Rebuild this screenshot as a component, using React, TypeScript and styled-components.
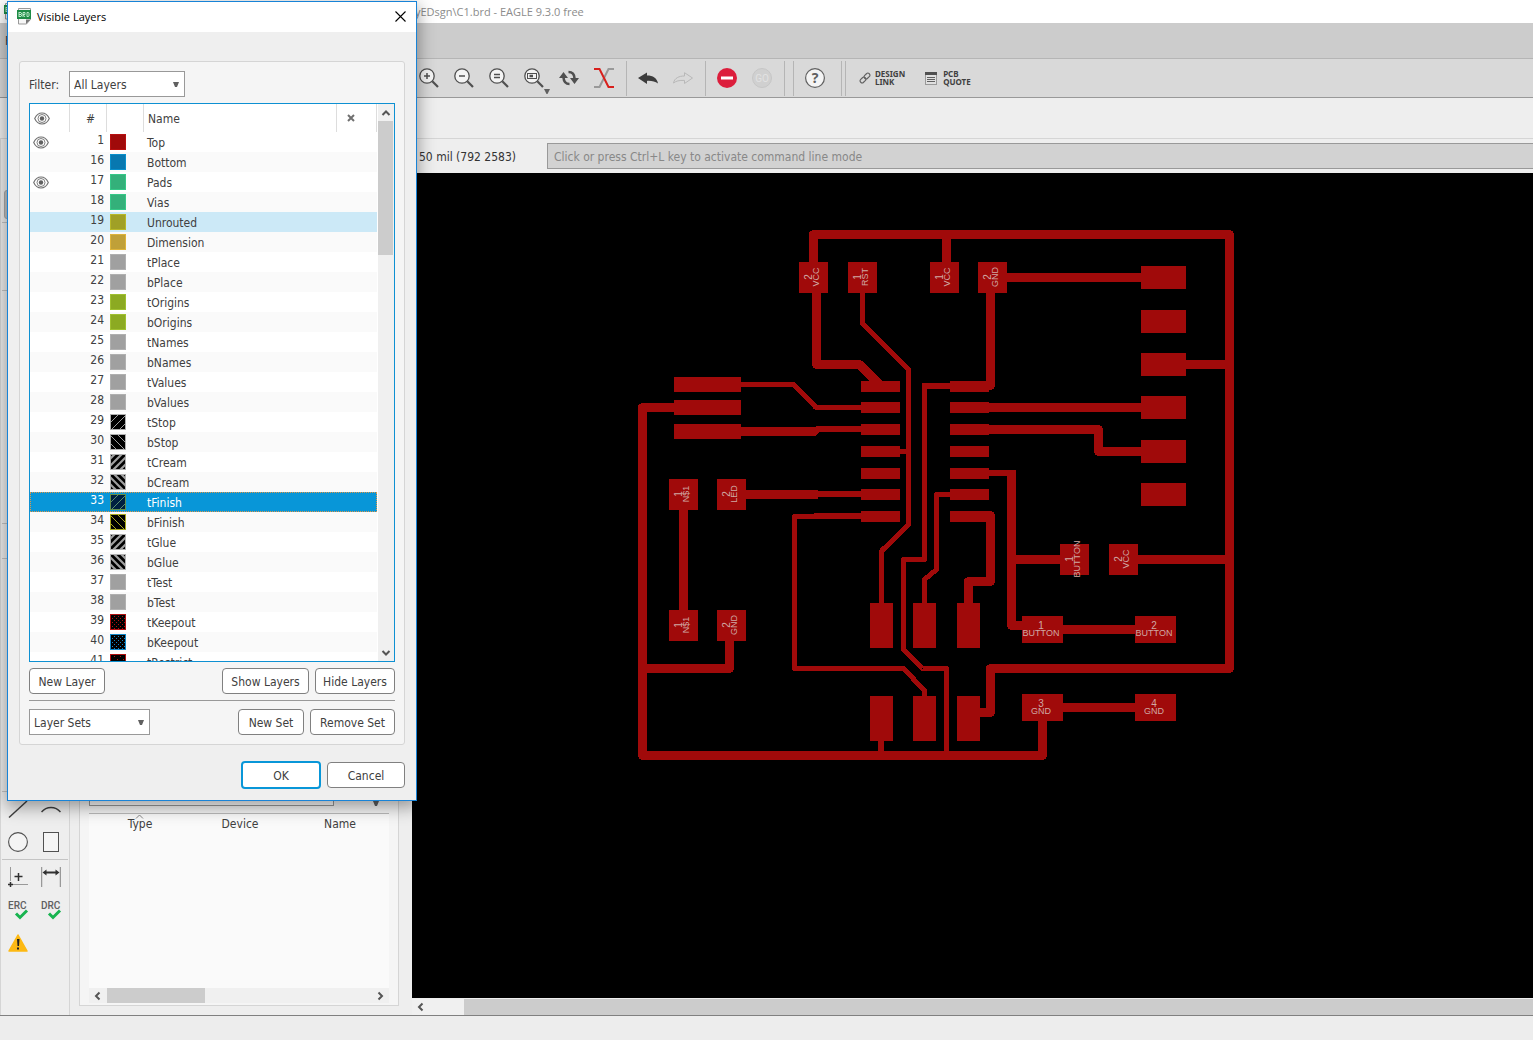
import React from "react";
import styled, { createGlobalStyle, css } from "styled-components";

const UI_FONT = '"DejaVu Sans Condensed", "Noto Sans", sans-serif';
const TITLE_FONT = '"Open Sans", "Noto Sans", sans-serif';
const COPPER = "#a00a0a";

const GlobalStyle = createGlobalStyle`
  *, *::before, *::after { box-sizing: border-box; }
  body { margin: 0; background: #eee; overflow: hidden; }
  button, input, select { font: inherit; color: inherit; margin: 0; }
`;

/* ---------- main window ---------- */

const Window = styled.div`
  position: relative;
  display: flex;
  flex-direction: column;
  height: 100vh;
  font: 12px/16px ${UI_FONT};
  color: #404040;
  background: #eeeeee;
`;

const TitleBar = styled.header`
  display: flex;
  align-items: center;
  gap: 396px;
  height: 23px;
  padding-left: 3px;
  background: #fff;
  color: #8c8c8c;
  font: 11px/16px ${TITLE_FONT};
  white-space: nowrap;
`;

const MenuBar = styled.nav`
  display: flex;
  align-items: center;
  height: 36px;
  padding-left: 5px;
  background: #ccc;
  border-bottom: 1px solid #b5b5b5;
`;

const ToolBar = styled.div`
  display: flex;
  align-items: center;
  height: 39px;
  padding-left: 411px;
  background: #d9d9d9;
  border-bottom: 1px solid #999;
`;

const ToolButton = styled.button`
  position: relative;
  display: grid;
  place-items: center;
  width: 35px;
  height: 34px;
  padding: 0;
  border: 0;
  background: none;
`;

const MenuArrow = styled.svg`
  position: absolute;
  right: 1px;
  bottom: 1px;
`;

const Divider = styled.span`
  width: 1px;
  height: 35px;
  margin: 0 3px 0 5px;
  background: #b5b5b5;
`;

const Grip = styled.span`
  width: 5px;
  height: 35px;
  margin: 0 13px 0 9px;
  border: solid #b5b5b5;
  border-width: 0 1px;
`;

const LabelledTool = styled.button`
  display: flex;
  align-items: center;
  gap: 4px;
  margin-right: 20px;
  padding: 0;
  border: 0;
  background: none;
  color: #404040;
  font: 700 8px/8px "Noto Sans", sans-serif;
  text-align: left;
`;

const SheetBar = styled.div`
  height: 41px;
  border-bottom: 1px solid #d5d5d5;
`;

const Workspace = styled.main`
  flex: 1;
  min-height: 0;
  display: grid;
  grid-template-columns: 70px 342px 1fr;
`;

const StatusBar = styled.footer`
  height: 25px;
  border-top: 1px solid #808080;
  background: #ededed;
`;

/* ---------- drawing tools ---------- */

const ToolBox = styled.aside`
  padding: 0 1px;
  border: solid #d5d5d5;
  border-width: 0 1px;
`;

const ToolGroup = styled.div<{ $height: number }>`
  display: grid;
  grid-template-columns: 32px 34px;
  grid-auto-rows: 33px;
  height: ${(p) => p.$height}px;
  border-bottom: 1px solid #c4c4c4;
  &:last-child { border-bottom: 0; }
`;

const DrawTool = styled.button<{ $active?: boolean }>`
  display: grid;
  place-items: center;
  padding: 0;
  border: 0;
  background: none;
  ${(p) => p.$active && css`
    grid-row: 2;
    margin: 18px 2px -14px;
    border: 1px solid #aaa;
    border-radius: 3px;
    background: #c4c4c4;
  `}
`;

/* ---------- inspector panel ---------- */

const PanelColumn = styled.section`
  display: flex;
  min-height: 0;
  padding: 4px 13px 9px 9px;
`;

const Panel = styled.div`
  flex: 1;
  display: flex;
  flex-direction: column;
  justify-content: flex-end;
  padding: 9px 9px 2px;
  border: 1px solid #d5d5d5;
  background: #f5f5f5;
`;

const SearchRow = styled.div`
  display: flex;
  align-items: flex-end;
  justify-content: space-between;
  margin-bottom: 7px;
  padding-right: 10px;
`;

const SearchBox = styled.input`
  width: 245px;
  height: 26px;
  border: 1px solid #999;
  background: #fff;
`;

const PartsArea = styled.div`
  height: 175px;
  border-top: 1px solid #bbb;
  background: #fafafa;
`;

const PartsTable = styled.table`
  width: 100%;
  table-layout: fixed;
  border-collapse: collapse;
  th { height: 20px; padding: 0 0 0 2px; font-weight: 400; text-align: center; }
`;

const SortMark = styled.svg`
  position: absolute;
  margin: -2px 0 0 -17px;
`;

const HScroll = styled.div<{ $height: number }>`
  display: flex;
  height: ${(p) => p.$height}px;
  background: #f0f0f0;
`;

const HThumb = styled.div<{ $grow?: boolean; $gap?: number }>`
  flex: ${(p) => (p.$grow ? "1" : "0 0 98px")};
  margin-left: ${(p) => p.$gap || 0}px;
  background: #ccc;
`;

const ScrollArrow = styled.button`
  display: grid;
  place-items: center;
  flex: none;
  width: 18px;
  height: 15px;
  padding: 0;
  border: 0;
  background: none;
`;

const Fill = styled.div`
  flex: 1;
`;

/* ---------- board editor ---------- */

const Editor = styled.section`
  display: flex;
  flex-direction: column;
  min-width: 0;
  min-height: 0;
`;

const CommandRow = styled.div`
  display: flex;
  align-items: center;
  height: 34px;
  padding-left: 7px;
  color: #333;
`;

const Coordinates = styled.output`
  width: 128px;
  padding-top: 2px;
  white-space: nowrap;
`;

const CommandInput = styled.input`
  flex: 1;
  height: 26px;
  padding: 2px 6px 0;
  border: 1px solid #999;
  border-right: 0;
  background: #d2d2d2;
  &::placeholder { color: #888; opacity: 1; }
`;

const Canvas = styled.div`
  flex: 1;
  min-height: 0;
  margin-bottom: 1px;
  overflow: hidden;
  background: #000;
  svg { display: block; width: 100%; height: 100%; }
`;

/* ---------- layers dialog ---------- */

const Dialog = styled.div`
  position: absolute;
  left: 7px;
  top: 1px;
  width: 410px;
  border: 1px solid #1883d7;
  background: #efefef;
  box-shadow: 0 5px 16px 1px rgba(0, 0, 0, 0.38);
`;

const DialogTitle = styled.div`
  display: flex;
  align-items: center;
  gap: 5px;
  height: 30px;
  padding: 0 4px 2px 8px;
  background: #fff;
  color: #000;
  h1 { flex: 1; margin: 0; padding-top: 2px; font: 11px/16px ${TITLE_FONT}; }
`;

const CloseButton = styled.button`
  display: grid;
  place-items: center;
  width: 24px;
  height: 24px;
  padding: 0;
  border: 0;
  background: none;
`;

const DialogBody = styled.div`
  padding: 29px 11px 11px;
`;

const GroupBox = styled.div`
  padding: 9px;
  border: 1px solid #d5d5d5;
  border-radius: 3px;
  background: #f5f5f5;
`;

const Row = styled.div<{ $top?: number; $end?: boolean }>`
  display: flex;
  align-items: center;
  gap: 6px;
  margin-top: ${(p) => p.$top || 0}px;
  ${(p) => p.$end && "justify-content: flex-end;"}
`;

const FilterLabel = styled.label`
  width: 34px;
  padding-top: 2px;
  white-space: nowrap;
`;

const SelectWrap = styled.span<{ $width: number }>`
  position: relative;
  width: ${(p) => p.$width}px;
  select {
    display: block;
    width: 100%;
    height: 26px;
    padding: 2px 20px 0 4px;
    border: 1px solid #999;
    border-radius: 0;
    background: #fff;
    appearance: none;
  }
  svg { position: absolute; right: 6px; top: 11px; pointer-events: none; }
`;

const Button = styled.button<{ $primary?: boolean; $width: number }>`
  width: ${(p) => p.$width}px;
  height: ${(p) => (p.$primary ? 28 : 26)}px;
  padding: 2px 0 0;
  border: ${(p) => (p.$primary ? "2px solid #0896d8" : "1px solid #808080")};
  border-radius: 4px;
  background: #fff;
  white-space: nowrap;
`;

const Rule = styled.hr`
  height: 1px;
  margin: 6px 0 0;
  border: 0;
  background: #999;
`;

const ListBox = styled.div`
  display: flex;
  height: 559px;
  margin-top: 6px;
  overflow: hidden;
  border: 1px solid #0e90d2;
  background: #fff;
`;

const LayerTable = styled.table`
  align-self: flex-start;
  width: 347px;
  table-layout: fixed;
  border-collapse: separate;
  border-spacing: 0;
  th {
    height: 28px;
    padding: 2px 0 0 4px;
    border-right: 1px solid #ddd;
    font-weight: 400;
    text-align: left;
  }
  td { height: 20px; padding: 0 0 0 3px; }
  svg { display: block; }
`;

const LayerRow = styled.tr<{ $state?: "hover" | "selected"; $odd: boolean }>`
  background: ${(p) => (p.$odd ? "#fafafa" : "#fff")};
  ${(p) => p.$state === "hover" && "background: #cce9f7;"}
  ${(p) => p.$state === "selected" && css`
    background: #0896d8;
    color: #fff;
    outline: 1px dotted #e09848;
    outline-offset: -1px;
  `}
`;

const NumberCell = styled.td`
  && { padding: 0 3px 4px 0; text-align: right; line-height: 16px; }
`;

const NameCell = styled.td`
  && { padding: 2px 0 0 3px; }
`;

const NumberHead = styled.th`
  && { padding: 2px 0 0 5px; text-align: center; }
`;

const IconHead = styled.th`
  && { padding-top: 0; }
`;

const MarkHead = styled.th`
  && { padding: 0 0 0 10px; }
`;

const VScroll = styled.div`
  display: flex;
  flex-direction: column;
  flex: 1;
  margin-left: 1px;
  padding-right: 1px;
  background: #f0f0f0;
  > button { width: 100%; height: 17px; }
  > div:first-of-type { height: 134px; background: #ccc; }
`;

/* ---------- small drawings ---------- */

const BoardFileIcon = () => (
  <svg width="16" height="17" viewBox="0 0 16 17">
    <path d="M2.500 .5h12v11l-4 4.500h-8z" fill="#f6f6f6" stroke="#999" />
    <path d="M14.500 11.500h-4.500v4.500z" fill="#777" />
    <rect x="1" y="2" width="14" height="9" fill="#1e8c46" />
    <path d="M3 4v5M3 4.500h2l.5 .5v1l-.5 .5h-2h2l.5 .5v1l-.5.500h-2M7 9V4.500h2v2h-2l2 2.500M11 4.500h1.500l.5.500v3l-.5.500h-1.500z" fill="none" stroke="#c8f0d4" strokeWidth=".9" />
  </svg>
);

const Eye = () => (
  <svg width="16" height="13" viewBox="0 0 16 13" fill="none" stroke="#707070" strokeWidth="1.100">
    <path d="M.7 6.500C2.500 2.500 5 1 8 1s5.500 1.500 7.300 5.500C13.500 10.500 11 12 8 12S2.500 10.500.7 6.500z" />
    <circle cx="8" cy="6.500" r="4" strokeWidth=".9" />
    <circle cx="8" cy="6.500" r="2.200" fill="#606060" stroke="none" />
  </svg>
);

const DownTriangle = () => (
  <svg width="6" height="5" viewBox="0 0 6 5"><path d="M0 0h6L4 5H2z" fill="#606060" /></svg>
);

const chevrons = {
  up: "M1.500 7 5 3.500 8.500 7",
  down: "M1.500 3 5 6.500 8.500 3",
  left: "M6.500 1.500 3 5l3.500 3.500",
  right: "M3.500 1.500 7 5 3.500 8.500",
};

const Chevron = ({ dir }: { dir: keyof typeof chevrons }) => (
  <svg width="10" height="10" viewBox="0 0 10 10"><path d={chevrons[dir]} fill="none" stroke="#555" strokeWidth="2" /></svg>
);

const Lens = ({ children }: { children: React.ReactNode }) => (
  <svg width="20" height="20" viewBox="0 0 20 20" fill="none" stroke="#505050">
    <circle cx="8" cy="8" r="7.200" fill="#f4f4f4" strokeWidth="1.300" />
    <path d="m13.300 13.300 5.700 5.700" strokeWidth="2.200" />
    {children}
  </svg>
);

/* ---------- layer data ---------- */

type Hatch = "solid" | "slash" | "back" | "slashWide" | "backWide" | "dots" | "sparse";
type Layer = { n: number; name: string; fill: Hatch; color: string; edge: string; bg?: string; on?: boolean };

const grey = { color: "#a0a0a0", edge: "#b0b0b0" };
const green = { color: "#34b07a", edge: "#36c888" };
const olive = { color: "#8caa22", edge: "#a0c030" };
const red = { color: "#b01010", edge: "#b01010" };

const layers: Layer[] = [
  { n: 1, name: "Top", fill: "solid", color: "#a00a0a", edge: "#b81010", on: true },
  { n: 16, name: "Bottom", fill: "solid", color: "#0878b0", edge: "#0a90cc" },
  { n: 17, name: "Pads", fill: "solid", ...green, on: true },
  { n: 18, name: "Vias", fill: "solid", ...green },
  { n: 19, name: "Unrouted", fill: "solid", color: "#a0a026", edge: "#b8b828" },
  { n: 20, name: "Dimension", fill: "solid", color: "#c0a038", edge: "#deb43a" },
  { n: 21, name: "tPlace", fill: "solid", ...grey },
  { n: 22, name: "bPlace", fill: "solid", ...grey },
  { n: 23, name: "tOrigins", fill: "solid", ...olive },
  { n: 24, name: "bOrigins", fill: "solid", ...olive },
  { n: 25, name: "tNames", fill: "solid", ...grey },
  { n: 26, name: "bNames", fill: "solid", ...grey },
  { n: 27, name: "tValues", fill: "solid", ...grey },
  { n: 28, name: "bValues", fill: "solid", ...grey },
  { n: 29, name: "tStop", fill: "slash", ...grey },
  { n: 30, name: "bStop", fill: "back", ...grey },
  { n: 31, name: "tCream", fill: "slashWide", ...grey },
  { n: 32, name: "bCream", fill: "backWide", ...grey },
  { n: 33, name: "tFinish", fill: "slash", color: "#5c9070", edge: "#64904c", bg: "#002040" },
  { n: 34, name: "bFinish", fill: "back", color: "#a8a820", edge: "#a8a820" },
  { n: 35, name: "tGlue", fill: "slashWide", ...grey },
  { n: 36, name: "bGlue", fill: "backWide", ...grey },
  { n: 37, name: "tTest", fill: "solid", ...grey },
  { n: 38, name: "bTest", fill: "solid", ...grey },
  { n: 39, name: "tKeepout", fill: "dots", ...red },
  { n: 40, name: "bKeepout", fill: "dots", color: "#1088c8", edge: "#1088c8" },
  { n: 41, name: "tRestrict", fill: "sparse", ...red },
];

const Swatch = ({ fill, color, edge, bg = "#000" }: Pick<Layer, "fill" | "color" | "edge" | "bg">) => {
  const wide = fill === "slashWide" || fill === "backWide";
  const offsets = wide ? [5, 12, 19, 26] : [9, 17, 25];
  const step = fill === "dots" ? 4 : 6;
  const dots: [number, number][] = [];
  if (fill === "dots" || fill === "sparse") {
    for (let y = 2; y < 15; y += step / 2)
      for (let x = 2 + ((y / (step / 2)) % 2) * (step / 2); x < 15; x += step) dots.push([x, y]);
  }
  return (
    <svg width="16" height="16" viewBox="0 0 16 16">
      <rect width="16" height="16" fill={fill === "solid" ? color : bg} />
      {(wide || fill === "slash" || fill === "back") && (
        <g stroke={color} strokeWidth={wide ? 2.2 : 1} transform={fill.startsWith("back") ? "matrix(-1 0 0 1 16 0)" : undefined}>
          {offsets.map((c) => <path key={c} d={`M${c} 0 0 ${c}`} />)}
        </g>
      )}
      {dots.map(([x, y]) => <rect key={`${x}-${y}`} x={x} y={y} width="1" height="1" fill={color} />)}
      <rect x=".5" y=".5" width="15" height="15" fill="none" stroke={edge} />
    </svg>
  );
};

/* ---------- board drawing ---------- */

type Pt = [number, number];

const thickTraces: Pt[][] = [
  [[813.5, 262], [813.5, 234.5], [1229.5, 234.5], [1229.5, 668.5], [990.5, 668.5], [990.5, 712.5], [975, 712.5]],
  [[946.5, 234.5], [946.5, 262]],
  [[816.5, 293], [816.5, 364.5], [859.5, 364.5], [881, 386]],
  [[674, 407.5], [642.5, 407.5], [642.5, 755.5], [1042.5, 755.5], [1042.5, 720]],
  [[741, 431.5], [814, 431.5], [816, 429.5]],
  [[683.5, 510], [683.5, 610]],
  [[746, 494.5], [818, 494.5]],
  [[729.5, 641], [729.5, 668.5], [642.5, 668.5]],
  [[990.5, 293], [990.5, 385.5], [984, 385.5]],
  [[1007, 277.5], [1141, 277.5]],
  [[1186, 364.5], [1229.5, 364.5]],
  [[989, 407.5], [1141, 407.5]],
  [[989, 429.5], [1098.5, 429.5], [1098.5, 451.5], [1141, 451.5]],
  [[1011.5, 470], [1011.5, 625.5], [1022, 625.5]],
  [[984, 515.5], [990.5, 515.5], [990.5, 581.5], [968.5, 581.5], [968.5, 603]],
  [[1011.5, 559.5], [1060, 559.5]],
  [[1138, 559.5], [1229.5, 559.5]],
  [[1063, 629.5], [1135, 629.5]],
  [[1063, 707.5], [1135, 707.5]],
];

const thinTraces: Pt[][] = [
  [[862.5, 293], [862.5, 323.5], [908.5, 369.5], [908.5, 524.5], [881.5, 551], [881.5, 603]],
  [[900, 451.5], [908.5, 451.5]],
  [[741, 384.5], [794, 384.5], [816, 407.5], [861, 407.5]],
  [[861, 516.5], [794.5, 516.5], [794.5, 668.5], [903.5, 668.5], [924.5, 690.5], [924.5, 696]],
  [[950, 386.5], [924.5, 386.5], [924.5, 559.5], [903.5, 559.5], [903.5, 649.5], [922.5, 668.5], [946.5, 668.5], [946.5, 752]],
  [[950, 494.5], [936.5, 494.5], [936.5, 569.5], [924.5, 579.5], [924.5, 603]],
];

const mediumTraces: Pt[][] = [
  [[814, 430], [818, 429], [861, 429]],
  [[818, 494], [861, 494]],
  [[814, 516], [861, 516]],
  [[922, 386], [950, 386]],
  [[989, 473], [1011, 473]],
  [[881, 741], [881, 752]],
];

const chipRows = [381, 402, 424, 446, 468, 489, 511];

const plainPads: [number, number, number, number][] = [
  ...chipRows.flatMap((y): [number, number, number, number][] => [[861, y, 39, 11], [950, y, 39, 11]]),
  ...[377, 400, 424].map((y): [number, number, number, number] => [674, y, 67, 15]),
  ...[266, 310, 353, 396, 440, 483].map((y): [number, number, number, number] => [1141, y, 45, 23]),
  ...[870, 913, 957].flatMap((x): [number, number, number, number][] => [[x, 603, 23, 45], [x, 696, 23, 45]]),
];

const uprightPads: [number, number, string, string][] = [
  [799, 262, "2", "VCC"], [848, 262, "1", "RST"], [930, 262, "1", "VCC"], [978, 262, "2", "GND"],
  [669, 479, "1", "N$1"], [717, 479, "2", "LED"], [669, 610, "1", "N$1"], [717, 610, "2", "GND"],
  [1060, 544, "1", "BUTTON"], [1109, 544, "2", "VCC"],
];

const flatPads: [number, number, string, string][] = [
  [1022, 616, "1", "BUTTON"], [1135, 616, "2", "BUTTON"], [1022, 694, "3", "GND"], [1135, 694, "4", "GND"],
];

const Traces = ({ list, width }: { list: Pt[][]; width: number }) => (
  <g fill="none" stroke={COPPER} strokeWidth={width} strokeLinejoin="round">
    {list.map((points, i) => <polyline key={i} points={points.map((p) => p.join(",")).join(" ")} />)}
  </g>
);

const Board = () => (
  <svg role="img" aria-label="Board layout">
    <g transform="translate(-412 -173)">
      <g shapeRendering="crispEdges">
        <Traces list={thickTraces} width={9} />
        <Traces list={mediumTraces} width={6} />
        <Traces list={thinTraces} width={5} />
        <g fill={COPPER}>
          {plainPads.map(([x, y, w, h]) => <rect key={`${x}-${y}`} x={x} y={y} width={w} height={h} />)}
          {uprightPads.map(([x, y]) => <rect key={`${x}-${y}`} x={x} y={y} width="29" height="31" />)}
          {flatPads.map(([x, y]) => <rect key={`${x}-${y}`} x={x} y={y} width="41" height="27" />)}
        </g>
      </g>
      <g fill="#d0a8a4" fontFamily='"Liberation Sans", sans-serif' fontSize="9" textAnchor="middle">
        {uprightPads.map(([x, y, pin, net]) => (
          <g key={`${x}-${y}`} transform={`translate(${x} ${y + 15}) rotate(-90)`}>
            <text y="13" fontSize="10">{pin}</text>
            <text y="20">{net}</text>
          </g>
        ))}
        {flatPads.map(([x, y, pin, net]) => (
          <g key={`${x}-${y}`} transform={`translate(${x + 19} ${y})`}>
            <text y="13" fontSize="10">{pin}</text>
            <text y="20">{net}</text>
          </g>
        ))}
      </g>
    </g>
  </svg>
);

/* ---------- page sections ---------- */

const MainToolBar = () => (
  <ToolBar>
    <ToolButton aria-label="Zoom in"><Lens><path d="M8 5v6M5 8h6" strokeWidth="1.500" /></Lens></ToolButton>
    <ToolButton aria-label="Zoom out"><Lens><path d="M5 8h6" strokeWidth="1.500" /></Lens></ToolButton>
    <ToolButton aria-label="Zoom redraw"><Lens><path d="M5 6.500h6M5 9.500h6" strokeWidth="1.300" /></Lens></ToolButton>
    <ToolButton aria-label="Zoom select">
      <Lens><rect x="3.500" y="5.500" width="9" height="5" /><path d="M5.500 8h3.500" strokeWidth="2.500" /></Lens>
      <MenuArrow width="6" height="5" viewBox="0 0 6 5"><path d="M0 0h6L3.500 5h-1z" fill="#606060" /></MenuArrow>
    </ToolButton>
    <ToolButton aria-label="Refresh">
      <svg width="20" height="20" viewBox="0 0 20 20">
        <path d="M4.500 9.500c.3 4 2.200 6.500 6 6.500M15.500 10.500c0-4-2.200-6.500-6-6.500" fill="none" stroke="#505050" strokeWidth="2.600" />
        <path d="m0 10 4.500-6L9 10zM20 10l-4.500 6-4.500-6z" fill="#505050" />
      </svg>
    </ToolButton>
    <ToolButton aria-label="Board">
      <svg width="20" height="20" viewBox="0 0 20 20" fill="none" strokeWidth="2">
        <path d="M20 1h-5.500L5.500 19H0" stroke="#999" />
        <path d="M0 1h5.500l9 18H20" stroke="#d8201c" />
      </svg>
    </ToolButton>
    <Divider />
    <ToolButton aria-label="Undo">
      <svg width="20" height="14" viewBox="0 0 20 14"><path d="M0 7 9 1.500v3c6 0 10 2.500 11 8-3-2-6-2.800-11-2.600V13z" fill="#3c3c3c" /></svg>
    </ToolButton>
    <ToolButton aria-label="Redo" disabled>
      <svg width="20" height="14" viewBox="0 0 20 14"><path d="m19.500 7-8-5.300V5C6 5 1.500 7 .5 12 3 10 6 9.200 11.500 9.400V12.500z" fill="none" stroke="#b8b8b8" /></svg>
    </ToolButton>
    <Divider />
    <ToolButton aria-label="Stop">
      <svg width="20" height="20" viewBox="0 0 20 20"><circle cx="10" cy="10" r="10" fill="#dc1e3c" /><rect x="4" y="8.500" width="12" height="3" fill="#fff" /></svg>
    </ToolButton>
    <ToolButton aria-label="Go" disabled>
      <svg width="20" height="20" viewBox="0 0 20 20">
        <circle cx="10" cy="10" r="9.500" fill="#d0d0d0" stroke="#c6c6c6" />
        <text x="10" y="14" textAnchor="middle" fontFamily="Roboto, sans-serif" fontSize="10" fill="#e2e2e2">GO</text>
      </svg>
    </ToolButton>
    <Divider />
    <Divider />
    <ToolButton aria-label="Help">
      <svg width="20" height="20" viewBox="0 0 20 20">
        <circle cx="10" cy="10" r="9.400" fill="#f4f4f4" stroke="#606060" strokeWidth="1.200" />
        <text x="10" y="15" textAnchor="middle" fontFamily='"Noto Sans", sans-serif' fontWeight="700" fontSize="14" fill="#606060">?</text>
      </svg>
    </ToolButton>
    <Grip />
    <LabelledTool>
      <svg width="12" height="12" viewBox="0 0 12 12" fill="none" stroke="#606060" strokeWidth="1.100">
        <rect x="-3.200" y="-2" width="6.400" height="4" rx="2" transform="translate(4 8) rotate(-45)" />
        <rect x="-3.200" y="-2" width="6.400" height="4" rx="2" transform="translate(8 4) rotate(-45)" />
      </svg>
      <span>DESIGN<br />LINK</span>
    </LabelledTool>
    <LabelledTool>
      <svg width="14" height="13" viewBox="0 0 14 13">
        <rect x=".5" y=".5" width="11" height="12" fill="#e0e0e0" stroke="#999" />
        <rect width="12" height="3" fill="#505050" />
        <path d="M2 5.500h8M2 7.500h8M2 9.500h8" stroke="#606060" />
      </svg>
      <span>PCB<br />QUOTE</span>
    </LabelledTool>
  </ToolBar>
);

const CheckTool = ({ label }: { label: string }) => (
  <DrawTool aria-label={label}>
    <svg width="22" height="22" viewBox="0 0 22 22">
      <text x="1" y="10" fontFamily="Roboto, sans-serif" fontSize="10" fontWeight="500" fill="#606060">{label}</text>
      <path d="m9 14.500 4 4 7-7" fill="none" stroke="#18b450" strokeWidth="3" />
    </svg>
  </DrawTool>
);

const DrawingTools = () => (
  <ToolBox>
    <ToolGroup $height={84}><DrawTool $active aria-label="Move" /></ToolGroup>
    <ToolGroup $height={68} />
    <ToolGroup $height={233} />
    <ToolGroup $height={35} />
    <ToolGroup $height={233} />
    <ToolGroup $height={68}>
      <DrawTool aria-label="Line"><svg width="20" height="20"><path d="M1 18.500 19 2" stroke="#404040" strokeWidth="1.500" /></svg></DrawTool>
      <DrawTool aria-label="Arc"><svg width="20" height="20"><path d="M.5 13c5-6 14-6 19 0" fill="none" stroke="#404040" strokeWidth="1.500" /></svg></DrawTool>
      <DrawTool aria-label="Circle"><svg width="20" height="20"><circle cx="10" cy="10" r="9.400" fill="#f4f4f4" stroke="#505050" strokeWidth="1.100" /></svg></DrawTool>
      <DrawTool aria-label="Rectangle"><svg width="16" height="20"><rect x=".5" y=".5" width="15" height="19" fill="#f4f4f4" stroke="#505050" /></svg></DrawTool>
    </ToolGroup>
    <ToolGroup $height={132}>
      <DrawTool aria-label="Mark">
        <svg width="20" height="20"><path d="M2.500 0v14M5 17.500h15" stroke="#999" /><path d="M2.500 15v5M0 17.500h5M10.500 6v8M6.500 9.500h8" stroke="#303030" strokeWidth="1.500" /></svg>
      </DrawTool>
      <DrawTool aria-label="Dimension">
        <svg width="20" height="20"><path d="M.5 0v20M19.500 0v20" stroke="#999" strokeWidth="1.500" /><path d="M4 5.500h12" stroke="#303030" strokeWidth="2" /><path d="m1.500 5.500 4-3v6zM18.500 5.500l-4-3v6z" fill="#303030" /></svg>
      </DrawTool>
      <CheckTool label="ERC" />
      <CheckTool label="DRC" />
      <DrawTool aria-label="Errors">
        <svg width="20" height="18" viewBox="0 0 20 18"><path d="M10 1 19 17H1z" fill="#fdb913" stroke="#fdb913" strokeWidth="1.500" strokeLinejoin="round" /><path d="M9 5h2.500l-.5 7H9.500zM9 13.500h2v2H9z" fill="#202020" /></svg>
      </DrawTool>
    </ToolGroup>
  </ToolBox>
);

const LayersDialog = () => (
  <Dialog role="dialog" aria-labelledby="layers-title">
    <DialogTitle>
      <BoardFileIcon />
      <h1 id="layers-title">Visible Layers</h1>
      <CloseButton aria-label="Close">
        <svg width="11" height="11" viewBox="0 0 11 11"><path d="m.5.500 10 10M10.500.5l-10 10" stroke="#000" strokeWidth="1.100" /></svg>
      </CloseButton>
    </DialogTitle>
    <DialogBody>
      <GroupBox>
        <Row>
          <FilterLabel htmlFor="filter">Filter:</FilterLabel>
          <SelectWrap $width={116}>
            <select id="filter"><option>All Layers</option></select>
            <DownTriangle />
          </SelectWrap>
        </Row>
        <ListBox>
          <LayerTable>
            <colgroup>
              <col width="40" /><col width="37" /><col width="37" /><col width="193" /><col width="40" />
            </colgroup>
            <thead>
              <tr>
                <IconHead aria-label="Visible"><Eye /></IconHead>
                <NumberHead>#</NumberHead>
                <th aria-label="Color" />
                <th>Name</th>
                <MarkHead aria-label="Used">
                  <svg width="8" height="8" viewBox="0 0 8 8"><path d="m1 1 6 6M7 1 1 7" stroke="#707070" strokeWidth="2" /></svg>
                </MarkHead>
              </tr>
            </thead>
            <tbody>
              {layers.map((l, i) => (
                <LayerRow key={l.n} $odd={i % 2 === 1} $state={l.n === 19 ? "hover" : l.n === 33 ? "selected" : undefined}>
                  <td>{l.on && <Eye />}</td>
                  <NumberCell>{l.n}</NumberCell>
                  <td><Swatch {...l} /></td>
                  <NameCell>{l.name}</NameCell>
                  <td />
                </LayerRow>
              ))}
            </tbody>
          </LayerTable>
          <VScroll>
            <ScrollArrow aria-label="Scroll up"><Chevron dir="up" /></ScrollArrow>
            <div />
            <Fill />
            <ScrollArrow aria-label="Scroll down"><Chevron dir="down" /></ScrollArrow>
          </VScroll>
        </ListBox>
        <Row $top={6}>
          <Button $width={76}>New Layer</Button>
          <Fill />
          <Button $width={87}>Show Layers</Button>
          <Button $width={80}>Hide Layers</Button>
        </Row>
        <Rule />
        <Row $top={8}>
          <SelectWrap $width={121}>
            <select aria-label="Layer sets"><option>Layer Sets</option></select>
            <DownTriangle />
          </SelectWrap>
          <Fill />
          <Button $width={66}>New Set</Button>
          <Button $width={85}>Remove Set</Button>
        </Row>
      </GroupBox>
      <Row $top={16} $end>
        <Button $primary $width={80}>OK</Button>
        <Button $width={78}>Cancel</Button>
      </Row>
    </DialogBody>
  </Dialog>
);

export default function App() {
  return (
    <Window>
      <GlobalStyle />
      <TitleBar><BoardFileIcon />yEDsgn\C1.brd - EAGLE 9.3.0 free</TitleBar>
      <MenuBar>File</MenuBar>
      <MainToolBar />
      <SheetBar />
      <Workspace>
        <DrawingTools />
        <PanelColumn>
          <Panel>
            <SearchRow>
              <SearchBox aria-label="Search parts" />
              <DownTriangle />
            </SearchRow>
            <PartsArea>
              <PartsTable>
                <thead>
                  <tr>
                    <th>
                      Type
                      <SortMark width="9" height="5" viewBox="0 0 9 5"><path d="M1 4.500 4.500 1 8 4.500" fill="none" stroke="#888" /></SortMark>
                    </th>
                    <th>Device</th>
                    <th>Name</th>
                  </tr>
                </thead>
              </PartsTable>
            </PartsArea>
            <HScroll $height={15}>
              <ScrollArrow aria-label="Scroll left"><Chevron dir="left" /></ScrollArrow>
              <HThumb />
              <Fill />
              <ScrollArrow aria-label="Scroll right"><Chevron dir="right" /></ScrollArrow>
            </HScroll>
          </Panel>
        </PanelColumn>
        <Editor>
          <CommandRow>
            <Coordinates>50 mil (792 2583)</Coordinates>
            <CommandInput aria-label="Command line" placeholder="Click or press Ctrl+L key to activate command line mode" />
          </CommandRow>
          <Canvas><Board /></Canvas>
          <HScroll $height={16}>
            <ScrollArrow aria-label="Scroll left"><Chevron dir="left" /></ScrollArrow>
            <HThumb $grow $gap={34} />
          </HScroll>
        </Editor>
      </Workspace>
      <StatusBar />
      <LayersDialog />
    </Window>
  );
}
